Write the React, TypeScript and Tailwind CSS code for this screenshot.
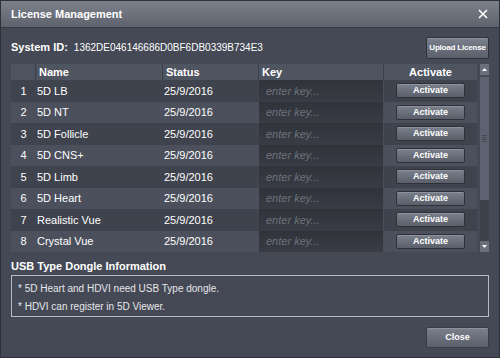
import React from "react";

const rows = [
  "5D LB",
  "5D NT",
  "5D Follicle",
  "5D CNS+",
  "5D Limb",
  "5D Heart",
  "Realistic Vue",
  "Crystal Vue",
];

const btn =
  "rounded-[2px] border border-[#2e3138] bg-gradient-to-b from-[#7a808c] to-[#5a5f6a] text-white font-bold whitespace-nowrap shadow-[inset_0_1px_0_rgba(255,255,255,0.15)]";

export default function App() {
  return (
    <div
      className="w-[500px] h-[358px] bg-[#444955] border border-[#2f3239] flex flex-col text-white text-[11px]"
      style={{ fontFamily: '"Liberation Sans", Arial, sans-serif' }}
    >
      <div className="h-[27px] shrink-0 flex items-center justify-between pl-[10px] pr-[11px] bg-gradient-to-b from-[#7c818c] to-[#5d626d] border-b border-[#363941]">
        <span className="font-bold text-[11px]">License Management</span>
        <svg width="10" height="10" viewBox="0 0 10 10">
          <path d="M1 1L9 9M9 1L1 9" stroke="#fff" strokeWidth="1.6" />
        </svg>
      </div>

      <div className="flex-1 flex flex-col px-[10px]">
        <div className="flex items-center justify-between mt-[9px] h-[21px]">
          <div className="flex items-center gap-[6px]">
            <span className="font-bold">System ID:</span>
            <span className="text-[10px]">1362DE046146686D0BF6DB0339B734E3</span>
          </div>
          <button className={`${btn} w-[63px] h-[22px] text-[8px] tracking-[-0.2px]`}>Upload License</button>
        </div>

        <div className="flex mt-[6px] gap-[3px]">
          <div className="w-[468px]">
            <div className="flex h-[16px] bg-[#4f5461] font-bold items-center">
              <div className="w-[25px] h-full border-r border-[#3c3f48]" />
              <div className="w-[127px] pl-[3px] h-full flex items-center border-r border-[#3c3f48]">Name</div>
              <div className="w-[96px] pl-[3px] h-full flex items-center border-r border-[#3c3f48]">Status</div>
              <div className="w-[125px] pl-[3px] h-full flex items-center border-r border-[#3c3f48]">Key</div>
              <div className="flex-1 text-center">Activate</div>
            </div>
            {rows.map((name, i) => (
              <div
                key={name}
                className={`flex h-[21.5px] items-center ${i % 2 === 0 ? "bg-[#3f434d]" : "bg-[#4b505c]"}`}
              >
                <div className="w-[25px] text-center">{i + 1}</div>
                <div className="w-[127px] pl-[1px]">{name}</div>
                <div className="w-[96px] pl-[1px]">25/9/2016</div>
                <div className="w-[125px] h-full flex items-center pl-[7px] bg-gradient-to-b from-[#30333a] to-[#393c44] border-r border-[#4a4e59] italic text-[#6e727c]">
                  enter key...
                </div>
                <div className="flex-1 flex justify-center">
                  <button className={`${btn} w-[69px] h-[15px] text-[9px]`}>Activate</button>
                </div>
              </div>
            ))}
          </div>
          <div className="w-[9px] flex flex-col">
            <div className="h-[11px] bg-[#6a6f7b] flex items-center justify-center">
              <svg width="5" height="3" viewBox="0 0 5 3"><path d="M0 3L2.5 0L5 3Z" fill="#fff" /></svg>
            </div>
            <div className="h-[123px] mt-[2px] bg-[#5d6270] flex items-center justify-center">
              <div className="flex flex-col gap-[1px]">
                <div className="w-[5px] h-px bg-[#444955]" />
                <div className="w-[5px] h-px bg-[#444955]" />
                <div className="w-[5px] h-px bg-[#444955]" />
                <div className="w-[5px] h-px bg-[#444955]" />
              </div>
            </div>
            <div className="flex-1 bg-[#3d414b]" />
            <div className="h-[11px] bg-[#6a6f7b] flex items-center justify-center">
              <svg width="5" height="3" viewBox="0 0 5 3"><path d="M0 0L2.5 3L5 0Z" fill="#fff" /></svg>
            </div>
          </div>
        </div>

        <div className="font-bold mt-[8px] leading-[12px]">USB Type Dongle Information</div>
        <div className="mt-[3px] h-[42px] border border-[#b6bac3] pl-[6px] pt-[5px] flex flex-col gap-[3px] text-[10px] text-[#e6e7ea]">
          <div>* 5D Heart and HDVI need USB Type dongle.</div>
          <div>* HDVI can register in 5D Viewer.</div>
        </div>

        <div className="flex justify-end mt-[10px]">
          <button className={`${btn} w-[63px] h-[21px] text-[9px] border-[#3a3d45]`}>Close</button>
        </div>
      </div>
    </div>
  );
}
